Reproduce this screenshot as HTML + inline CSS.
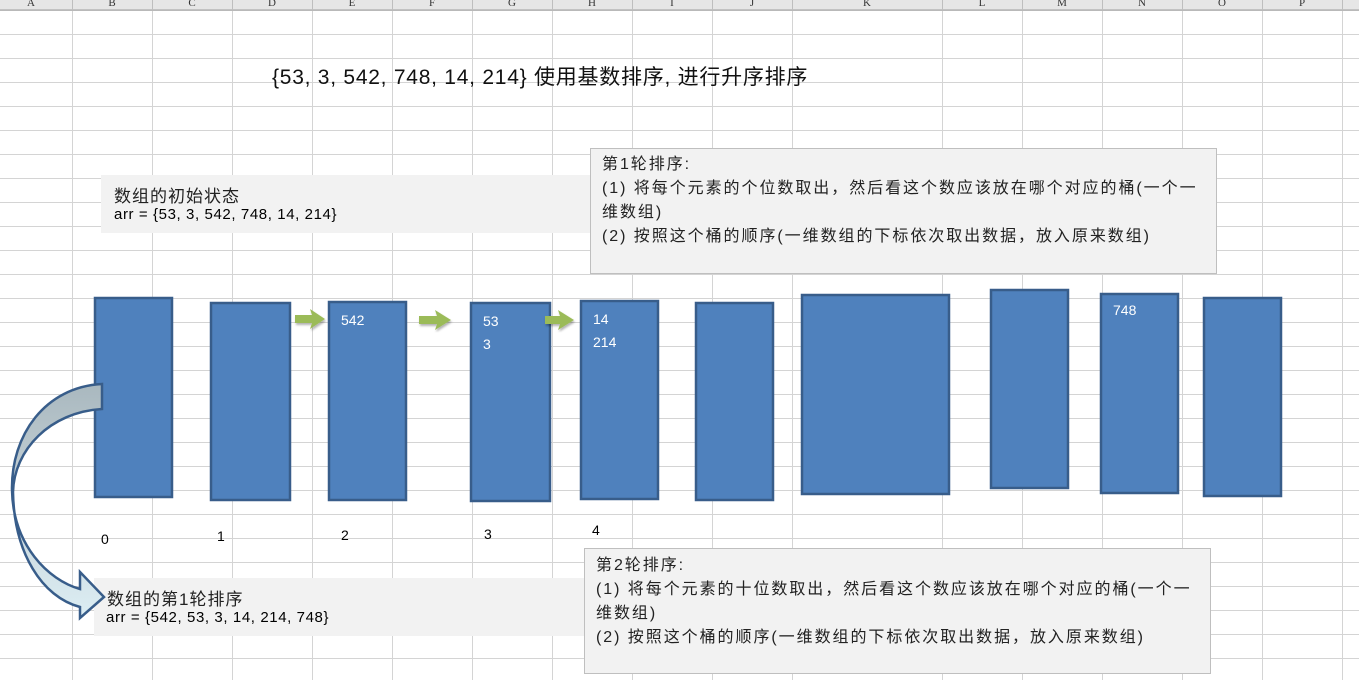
<!DOCTYPE html>
<html><head><meta charset="utf-8"><style>
body{margin:0;width:1359px;height:680px;overflow:hidden;background:#fff;position:relative;font-family:"Liberation Sans","Noto Sans CJK SC",sans-serif;}
.t{position:absolute;white-space:nowrap;color:#000;}
.box{position:absolute;background:#F2F2F2;}
.w{position:absolute;color:#fff;font-size:14px;}
.bt{font-size:16px;line-height:24px;letter-spacing:1.95px;color:#222}
</style></head><body>
<svg width="1359" height="680" style="position:absolute;left:0;top:0">
<defs>
<pattern id="rows" width="1359" height="24" patternUnits="userSpaceOnUse" y="10"><line x1="0" y1="0.5" x2="1359" y2="0.5" stroke="#D4D4D4"/></pattern>
<linearGradient id="ag" x1="0" y1="0" x2="0" y2="1"><stop offset="0" stop-color="#A9B8BF"/><stop offset="0.5" stop-color="#C7D3D8"/><stop offset="1" stop-color="#DCEEF4"/></linearGradient>
<filter id="sh"><feDropShadow dx="1" dy="2" stdDeviation="1" flood-color="#000" flood-opacity="0.3"/></filter>
</defs>
<rect x="0" y="10" width="1359" height="670" fill="url(#rows)"/>
<g stroke="#D4D4D4">
<line x1="72.5" y1="0" x2="72.5" y2="680"/><line x1="152.5" y1="0" x2="152.5" y2="680"/><line x1="232.5" y1="0" x2="232.5" y2="680"/><line x1="312.5" y1="0" x2="312.5" y2="680"/><line x1="392.5" y1="0" x2="392.5" y2="680"/><line x1="472.5" y1="0" x2="472.5" y2="680"/><line x1="552.5" y1="0" x2="552.5" y2="680"/><line x1="632.5" y1="0" x2="632.5" y2="680"/><line x1="712.5" y1="0" x2="712.5" y2="680"/><line x1="792.5" y1="0" x2="792.5" y2="680"/><line x1="942.5" y1="0" x2="942.5" y2="680"/><line x1="1022.5" y1="0" x2="1022.5" y2="680"/><line x1="1102.5" y1="0" x2="1102.5" y2="680"/><line x1="1182.5" y1="0" x2="1182.5" y2="680"/><line x1="1262.5" y1="0" x2="1262.5" y2="680"/><line x1="1342.5" y1="0" x2="1342.5" y2="680"/>
</g>
<rect x="0" y="0" width="1359" height="10" fill="#E6E6E6"/>
<line x1="0" y1="10" x2="1359" y2="10" stroke="#9E9E9E"/>
<g stroke="#BEBEBE"><line x1="72.5" y1="0" x2="72.5" y2="10"/><line x1="152.5" y1="0" x2="152.5" y2="10"/><line x1="232.5" y1="0" x2="232.5" y2="10"/><line x1="312.5" y1="0" x2="312.5" y2="10"/><line x1="392.5" y1="0" x2="392.5" y2="10"/><line x1="472.5" y1="0" x2="472.5" y2="10"/><line x1="552.5" y1="0" x2="552.5" y2="10"/><line x1="632.5" y1="0" x2="632.5" y2="10"/><line x1="712.5" y1="0" x2="712.5" y2="10"/><line x1="792.5" y1="0" x2="792.5" y2="10"/><line x1="942.5" y1="0" x2="942.5" y2="10"/><line x1="1022.5" y1="0" x2="1022.5" y2="10"/><line x1="1102.5" y1="0" x2="1102.5" y2="10"/><line x1="1182.5" y1="0" x2="1182.5" y2="10"/><line x1="1262.5" y1="0" x2="1262.5" y2="10"/><line x1="1342.5" y1="0" x2="1342.5" y2="10"/></g>
<g font-family="Liberation Serif" font-size="11" fill="#333" text-anchor="middle">
<text x="31" y="6">A</text><text x="112" y="6">B</text><text x="192" y="6">C</text><text x="272" y="6">D</text><text x="352" y="6">E</text><text x="432" y="6">F</text><text x="512" y="6">G</text><text x="592" y="6">H</text><text x="672" y="6">I</text><text x="752" y="6">J</text><text x="867" y="6">K</text><text x="982" y="6">L</text><text x="1062" y="6">M</text><text x="1142" y="6">N</text><text x="1222" y="6">O</text><text x="1302" y="6">P</text>
</g>
</svg>

<div class="box" style="left:101px;top:175px;width:489px;height:58px"></div>
<div class="t" style="left:114px;top:182px;font-size:17px;letter-spacing:1px;color:#222">数组的初始状态</div>
<div class="t" style="left:114px;top:206px;font-size:15px;letter-spacing:0.6px">arr = {53, 3, 542, 748, 14, 214}</div>

<div class="box" style="left:94px;top:578px;width:491px;height:58px"></div>

<div class="box" style="left:590px;top:148px;width:625px;height:124px;border:1px solid #BFBFBF"></div>
<div class="t bt" style="left:602px;top:153px">第1轮排序:<br>(1) 将每个元素的个位数取出，然后看这个数应该放在哪个对应的桶(一个一<br>维数组)<br>(2) 按照这个桶的顺序(一维数组的下标依次取出数据，放入原来数组)</div>

<div class="box" style="left:584px;top:548px;width:625px;height:124px;border:1px solid #BFBFBF"></div>
<div class="t bt" style="left:596px;top:554px">第2轮排序:<br>(1) 将每个元素的十位数取出，然后看这个数应该放在哪个对应的桶(一个一<br>维数组)<br>(2) 按照这个桶的顺序(一维数组的下标依次取出数据，放入原来数组)</div>

<div class="t" style="left:272px;top:61px;font-size:21px;letter-spacing:0.75px;color:#111">{53, 3, 542, 748, 14, 214} 使用基数排序, 进行升序排序</div>

<svg width="1359" height="680" style="position:absolute;left:0;top:0">
<g fill="#4F81BD" stroke="#385D8A" stroke-width="2.5">
<rect x="95" y="298" width="77" height="199"/>
<rect x="211" y="303" width="79" height="197"/>
<rect x="329" y="302" width="77" height="198"/>
<rect x="471" y="303" width="79" height="198"/>
<rect x="581" y="301" width="77" height="198"/>
<rect x="696" y="303" width="77" height="197"/>
<rect x="802" y="295" width="147" height="199"/>
<rect x="991" y="290" width="77" height="198"/>
<rect x="1101" y="294" width="77" height="199"/>
<rect x="1204" y="298" width="77" height="198"/>
</g>
<g fill="#9BBB59" filter="url(#sh)">
<path d="M295,315 L312,315 L310,309 L325,319 L310,329 L312,323 L295,323 Z"/>
<path d="M419,316 L437,316 L435,310 L451,320 L435,330 L437,324 L419,324 Z"/>
<path d="M545,316 L560,316 L558,310 L574,320 L558,330 L560,324 L545,324 Z"/>
</g>
<path d="M102,384 C45,387 11,435 12,490 C13,545 48,580 80,589 L80,572 L104,597 L80,618 L80,607 C42,597 14,553 13,492 C14,450 50,412 102,409 Z" fill="url(#ag)" stroke="#385D8A" stroke-width="2.5" stroke-linejoin="miter"/>
</svg>

<div class="t" style="left:107px;top:585px;font-size:17px;letter-spacing:1px;color:#222">数组的第1轮排序</div>
<div class="t" style="left:106px;top:609px;font-size:15px;letter-spacing:0.6px">arr = {542, 53, 3, 14, 214, 748}</div>

<div class="w" style="left:341px;top:312px">542</div>
<div class="w" style="left:483px;top:313px">53</div>
<div class="w" style="left:483px;top:336px">3</div>
<div class="w" style="left:593px;top:311px">14</div>
<div class="w" style="left:593px;top:334px">214</div>
<div class="w" style="left:1113px;top:302px">748</div>

<div class="t" style="left:101px;top:531px;font-size:14px">0</div>
<div class="t" style="left:217px;top:528px;font-size:14px">1</div>
<div class="t" style="left:341px;top:527px;font-size:14px">2</div>
<div class="t" style="left:484px;top:526px;font-size:14px">3</div>
<div class="t" style="left:592px;top:522px;font-size:14px">4</div>
</body></html>
